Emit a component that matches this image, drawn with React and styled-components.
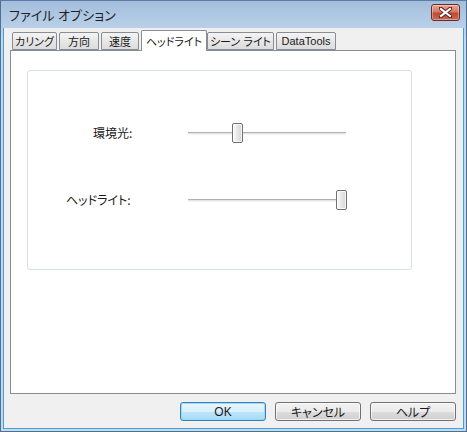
import React from "react";
import styled, { createGlobalStyle } from "styled-components";

const Global = createGlobalStyle`
  html, body {
    margin: 0;
    padding: 0;
    background: #ffffff;
  }
  body {
    font-family: "Liberation Sans", "Noto Sans CJK JP", sans-serif;
    font-size: 12px;
    color: #000;
    font-feature-settings: "palt";
  }
`;

const Window = styled.div`
  width: 467px;
  height: 432px;
  box-sizing: border-box;
  display: flex;
  flex-direction: column;
  background: linear-gradient(#a3bedc, #c4d8ee 40px, #c4d8ee);
  border: 1px solid #4f6f93;
  border-top-color: #5b7ca3;
  padding: 0 2px 2px 2px;
`;

const TitleBar = styled.div`
  height: 27px;
  display: flex;
  align-items: center;
  justify-content: space-between;
  padding: 0 4px 0 6px;
  flex-shrink: 0;
`;

const Title = styled.span`
  font-family: "Noto Sans CJK JP", sans-serif;
  font-size: 13px;
  color: #1e1e1e;
  letter-spacing: 0.2px;
  margin-top: -1px;
`;

const CloseButton = styled.div`
  width: 29px;
  height: 17px;
  box-sizing: border-box;
  border: 1px solid #6b2a2a;
  border-radius: 3px;
  margin-top: -4px;
  background: linear-gradient(#e8a897, #d47a66 45%, #c04a32 55%, #c86a50);
  display: flex;
  align-items: center;
  justify-content: center;
  box-shadow: inset 0 0 0 1px rgba(255, 255, 255, 0.35);
`;

const Client = styled.div`
  flex: 1;
  display: flex;
  flex-direction: column;
  background: #f0f0f0;
  border-left: 1px solid #3fa0db;
  border-right: 1px solid #3fa0db;
  border-bottom: 1px solid #3fa0db;
  padding: 2px 7px 7px 6px;
`;

const TabRow = styled.div`
  height: 20px;
  display: flex;
  align-items: flex-end;
  gap: 2px;
  padding-left: 2px;
  position: relative;
  z-index: 1;
`;

const Tab = styled.div`
  width: ${(p) => p.w}px;
  height: ${(p) => (p.active ? 21 : 18)}px;
  box-sizing: border-box;
  border: 1px solid #898c95;
  border-bottom: ${(p) => (p.active ? "none" : "1px solid #898c95")};
  border-radius: 2px 2px 0 0;
  background: ${(p) =>
    p.active ? "#ffffff" : "linear-gradient(#f4f4f4, #e7e7e7 50%, #dcdcdc)"};
  margin-bottom: ${(p) => (p.active ? -1 : 0)}px;
  margin-right: ${(p) => (p.active ? -2 : 0)}px;
  display: flex;
  align-items: ${(p) => (p.active ? "flex-start" : "center")};
  justify-content: center;
  padding-top: ${(p) => (p.active ? 2 : 0)}px;
  font-size: 11px;
  color: #1a1a1a;
  white-space: nowrap;
  overflow: hidden;
`;

const Panel = styled.div`
  flex: 1;
  background: #ffffff;
  border: 1px solid #898c95;
  padding: 19px 0 0 16px;
`;

const Group = styled.div`
  width: 385px;
  height: 200px;
  box-sizing: border-box;
  border: 1px solid #d5dfe5;
  border-radius: 3px;
  padding: 52px 0 0 0;
  display: flex;
  flex-direction: column;
  gap: 47px;
`;

const Row = styled.div`
  height: 20px;
  display: flex;
  align-items: center;
`;

const Label = styled.div`
  width: 160px;
  box-sizing: border-box;
  padding-left: ${(p) => p.indent}px;
  font-family: "Noto Sans CJK JP", sans-serif;
  font-size: 12px;
  color: #1a1a1a;
  margin-top: -1px;
`;

const Slider = styled.div`
  width: 158px;
  height: 20px;
  position: relative;
`;

const Track = styled.div`
  position: absolute;
  left: 0;
  right: 0;
  top: 9px;
  height: 3px;
  box-sizing: border-box;
  border-top: 1px solid #b0b0b0;
  border-bottom: 1px solid #f4f4f4;
  background: #e6e6e6;
`;

const Thumb = styled.div`
  position: absolute;
  top: 0;
  width: 11px;
  height: 20px;
  box-sizing: border-box;
  border: 1px solid #707070;
  border-radius: 2px;
  background: linear-gradient(90deg, #fdfdfd, #e6e6e6 50%, #d6d6d6);
  box-shadow: inset 0 0 0 1px rgba(255, 255, 255, 0.8);
`;

const ButtonRow = styled.div`
  margin-top: 8px;
  display: flex;
  justify-content: flex-end;
  gap: 9px;
`;

const Button = styled.div`
  width: 86px;
  height: 19px;
  box-sizing: border-box;
  border: 1px solid ${(p) => (p.primary ? "#3c7fb1" : "#707070")};
  border-radius: 3px;
  background: ${(p) =>
    p.primary
      ? "linear-gradient(#eaf6fd, #d9f0fc 50%, #bee6fd 50%, #a7d9f5)"
      : "linear-gradient(#f2f2f2, #ebebeb 50%, #dddddd 50%, #cfcfcf)"};
  box-shadow: inset 0 0 0 1px
    ${(p) => (p.primary ? "rgba(140, 220, 255, 0.9)" : "rgba(255, 255, 255, 0.7)")};
  display: flex;
  align-items: center;
  justify-content: center;
  font-size: 12px;
  color: #1a1a1a;
`;

const tabs = [
  { label: "カリング", w: 45 },
  { label: "方向", w: 40 },
  { label: "速度", w: 38 },
  { label: "ヘッドライト", w: 66, active: true },
  { label: "シーン ライト", w: 67 },
  { label: "DataTools", w: 60 },
];

const sliders = [
  { label: "環境光:", indent: 65, pos: 44 },
  { label: "ヘッドライト:", indent: 38, pos: 148 },
];

const CloseIcon = () => (
  <svg width="13" height="11" viewBox="0 0 13 11">
    <path
      d="M1.5 1.5 L11.5 9.5 M11.5 1.5 L1.5 9.5"
      stroke="#5a2020"
      strokeWidth="4"
      strokeLinecap="square"
    />
    <path
      d="M2 2 L11 9 M11 2 L2 9"
      stroke="#ffffff"
      strokeWidth="2.2"
      strokeLinecap="square"
    />
  </svg>
);

export default function App() {
  return (
    <>
      <Global />
      <Window>
        <TitleBar>
          <Title>ファイル オプション</Title>
          <CloseButton>
            <CloseIcon />
          </CloseButton>
        </TitleBar>
        <Client>
          <TabRow>
            {tabs.map((t) => (
              <Tab key={t.label} w={t.w} active={t.active}>
                {t.label}
              </Tab>
            ))}
          </TabRow>
          <Panel>
            <Group>
              {sliders.map((s) => (
                <Row key={s.label}>
                  <Label indent={s.indent}>{s.label}</Label>
                  <Slider>
                    <Track />
                    <Thumb style={{ left: s.pos }} />
                  </Slider>
                </Row>
              ))}
            </Group>
          </Panel>
          <ButtonRow>
            <Button primary>OK</Button>
            <Button>キャンセル</Button>
            <Button>ヘルプ</Button>
          </ButtonRow>
        </Client>
      </Window>
    </>
  );
}
